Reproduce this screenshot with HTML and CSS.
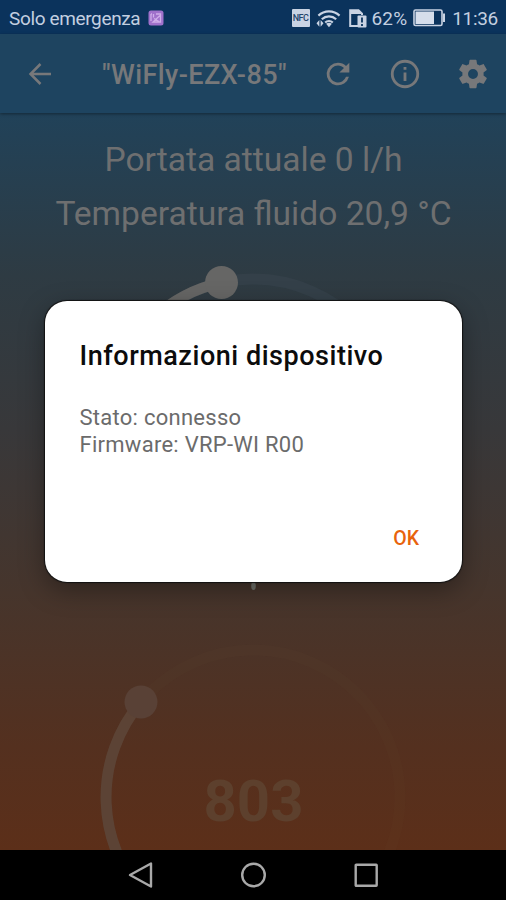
FILE: index.html
```
<!DOCTYPE html>
<html lang="it">
<head>
    <meta charset="UTF-8">
    <meta name="viewport" content="width=device-width, initial-scale=1.0">
    <title>WiFly-EZX-85</title>
    <link rel="stylesheet" href="styles.css">
</head>
<body>
    <div class="phone">
        <div class="status-bar">
            <span class="carrier">Solo emergenza</span>
            <svg class="app-badge" width="16" height="16" viewBox="0 0 16 16">
                <rect x="0.5" y="0.5" width="15" height="15" rx="2.5" fill="#a071cb"/>
                <path d="M3 4v7M5.500 4v3.500M3 4h1M8 4h4.500v8H5l7-6.500M6 8.500l5 3" fill="none" stroke="#cfadea" stroke-width="1.300"/>
            </svg>
            <span class="nfc">NFC</span>
            <svg class="wifi" width="25" height="19" viewBox="0 0 26 19">
                <g fill="none" stroke="#c9d3e3" stroke-width="2.200">
                    <path d="M2.500 6.500a16 16 0 0 1 22 0"/>
                    <path d="M6 10.300a11 11 0 0 1 15 0"/>
                    <path d="M9.500 13.700a6 6 0 0 1 8 0"/>
                </g>
                <path d="M13.500 18.500l-3-3.500q3-2 6 0z" fill="#c9d3e3"/>
                <path d="M.500 14.500l3-3.500v7zM7.800 14.500l-3-3.500v7z" fill="#c9d3e3"/>
            </svg>
            <svg class="sim" width="18" height="19" viewBox="0 0 18 19">
                <path d="M9 17H1.200V1.200h8.300l3.500 3.500V6" fill="none" stroke="#c9d3e3" stroke-width="2"/>
                <path d="M1 1h8.500L13 5H1z" fill="#c9d3e3"/>
                <rect x="8.500" y="6.500" width="9" height="12" rx="1" fill="#c9d3e3"/>
                <path d="M13 8.500v5M13 15v2" stroke="#0b335c" stroke-width="1.800"/>
            </svg>
            <span class="percent">62%</span>
            <svg class="battery" width="33" height="18" viewBox="0 0 33 18">
                <rect x="1" y="1" width="28" height="15.500" rx="1.500" fill="none" stroke="#c9d3e3" stroke-width="1.600"/>
                <rect x="2.500" y="2.500" width="18.500" height="12.500" fill="#d6deeb"/>
                <path d="M31 4.500v8.500" stroke="#c9d3e3" stroke-width="2"/>
            </svg>
            <span class="clock">11:36</span>
        </div>

        <div class="app-bar">
            <svg class="back" width="24" height="24" viewBox="0 0 24 24">
                <path d="M23 12H2.500M12.500 2L2.500 12l10 10" fill="none" stroke="currentColor" stroke-width="2.500"/>
            </svg>
            <h1>"WiFly-EZX-85"</h1>
            <svg class="refresh" width="34" height="34" viewBox="0 0 24 24">
                <path fill="currentColor" d="M17.650 6.350A7.960 7.960 0 0 0 12 4a8 8 0 1 0 7.730 10h-2.080A6 6 0 1 1 12 6c1.660 0 3.140.690 4.220 1.780L13 11h7V4z"/>
            </svg>
            <svg class="info" width="34" height="34" viewBox="0 0 24 24">
                <path fill="currentColor" d="M11 17h2v-6h-2zM12 2a10 10 0 1 0 0 20 10 10 0 0 0 0-20zm0 18a8 8 0 1 1 0-16 8 8 0 0 1 0 16zM11 9h2V7h-2z"/>
            </svg>
            <svg class="settings" width="34" height="34" viewBox="0 0 24 24">
                <path fill="currentColor" d="M19.430 12.980c.040-.320.070-.640.070-.980s-.030-.660-.070-.980l2.110-1.650c.190-.150.240-.420.120-.640l-2-3.460c-.120-.220-.390-.300-.610-.220l-2.490 1c-.520-.400-1.080-.730-1.690-.980l-.380-2.650A.488.488 0 0 0 14 2h-4c-.250 0-.460.180-.490.420l-.380 2.650c-.610.250-1.170.590-1.690.980l-2.490-1c-.230-.090-.490 0-.610.220l-2 3.460c-.130.220-.070.490.120.640l2.110 1.650c-.040.320-.070.650-.070.980s.030.660.070.980l-2.110 1.650c-.190.150-.240.420-.120.640l2 3.460c.120.220.390.300.610.220l2.490-1c.520.400 1.080.730 1.690.980l.380 2.650c.030.240.240.420.490.420h4c.250 0 .460-.180.490-.420l.380-2.650c.610-.250 1.170-.590 1.690-.980l2.490 1c.230.090.490 0 .610-.220l2-3.460c.120-.220.070-.490-.120-.640zM12 15.500a3.500 3.500 0 1 1 0-7 3.500 3.500 0 0 1 0 7z"/>
            </svg>
        </div>

        <div class="content">
            <p class="reading">Portata attuale 0 l/h</p>
            <p class="reading">Temperatura fluido 20,9 °C</p>

            <svg class="gauge gauge-flow" width="320" height="330" viewBox="0 0 320 330">
                <path class="track" d="M56 264A147 147 0 1 1 264 264"/>
                <path class="value" d="M56 264A147 147 0 0 1 128.500 16.500"/>
                <circle class="knob" cx="128.500" cy="16.500" r="16.500"/>
                <ellipse class="tick" cx="160.500" cy="320" rx="2.300" ry="4"/>
            </svg>

            <svg class="gauge gauge-power" width="320" height="320" viewBox="0 0 320 320">
                <path class="track" d="M56 264A147 147 0 1 1 264 264"/>
                <path class="value" d="M56 264A147 147 0 0 1 48 65"/>
                <circle class="knob" cx="48" cy="65" r="16.500"/>
                <text x="160.500" y="184" text-anchor="middle">803</text>
            </svg>
        </div>

        <div class="nav-bar">
            <svg width="26" height="28" viewBox="0 0 26 28">
                <path d="M24 2.500v23L3 14z"/>
            </svg>
            <svg width="26" height="28" viewBox="0 0 26 28">
                <circle cx="13.500" cy="14" r="11.300"/>
            </svg>
            <svg width="26" height="28" viewBox="0 0 26 28">
                <rect x="2.700" y="3.700" width="21" height="21" rx="0.500"/>
            </svg>
        </div>

        <div class="dialog">
            <h2>Informazioni dispositivo</h2>
            <p>Stato: connesso<br>Firmware: VRP-WI R00</p>
            <button class="ok-btn">OK</button>
        </div>
    </div>
</body>
</html>
```
FILE: styles.css
```
* {
    margin: 0;
    padding: 0;
    box-sizing: border-box;
}

body {
    background: #000;
    font-family: Roboto, sans-serif;
    overflow: hidden;
}

.phone {
    position: relative;
    display: flex;
    flex-direction: column;
    width: 506px;
    height: 900px;
    overflow: hidden;
}

/* Android status bar */
.status-bar {
    display: flex;
    align-items: center;
    flex: none;
    height: 34px;
    padding: 2px 8px 0 9px;
    background: #0b335c;
    color: #c3cfe0;
    font-size: 19px;
    white-space: nowrap;
}

.carrier {
    letter-spacing: -0.36px;
}

.app-badge {
    margin-left: 8px;
}

.nfc {
    width: 18px;
    height: 18px;
    margin-left: auto;
    border-radius: 1px;
    background: #c9d3e3;
    color: #24456b;
    font-size: 9px;
    font-weight: 500;
    line-height: 18px;
    letter-spacing: -0.5px;
    text-align: center;
}

.wifi {
    margin-left: 6px;
}

.sim {
    margin-left: 8px;
}

.percent {
    margin-left: 5px;
    letter-spacing: 0.1px;
}

.battery {
    margin-left: 6px;
}

.clock {
    margin-left: 6px;
    letter-spacing: -0.3px;
}

.app-bar {
    display: flex;
    align-items: center;
    flex: none;
    height: 79px;
    padding: 0 16px 0 28px;
    background: #1e4460;
    color: #77787a;
    box-shadow: 0 1px 3px rgba(0, 0, 0, 0.4);
    z-index: 1;
}

.app-bar h1 {
    margin-left: 50px;
    width: 186px;
    padding-top: 3px;
    font-size: 27px;
    font-weight: 500;
    letter-spacing: 0.4px;
    white-space: nowrap;
}

.refresh {
    margin-left: 33px;
}

.info {
    margin-left: 33px;
}

.settings {
    margin-left: 34px;
}

.content {
    display: flex;
    flex-direction: column;
    align-items: center;
    flex: none;
    height: 737px;
    padding-top: 20px;
    overflow: hidden;
    background: linear-gradient(#214259 0%, #2e3b43 22%, #38383a 43%, #46352c 65%, #54301f 86%, #5c2f19 100%);
}

.reading {
    padding-left: 1px;
    color: #6e6f70;
    font-size: 33.6px;
    line-height: 54px;
    white-space: nowrap;
}

.gauge {
    flex: none;
}

.gauge path {
    fill: none;
    stroke-width: 11;
}

.gauge-flow {
    margin-top: 25px;
}

.gauge-flow .track {
    stroke: #344049;
}

.gauge-flow .value {
    stroke: #666665;
}

.gauge-flow .knob {
    fill: #666665;
}

.gauge-flow .tick {
    fill: #70716b;
}

.gauge-power {
    margin-top: 41px;
}

.gauge-power .track {
    stroke: rgba(120, 90, 80, 0.04);
}

.gauge-power .value {
    stroke: #5c4335;
}

.gauge-power .knob {
    fill: #594136;
}

.gauge-power text {
    fill: #5d402d;
    font-size: 58px;
    font-weight: 700;
}

.nav-bar {
    display: flex;
    align-items: center;
    justify-content: center;
    gap: 87px;
    flex: none;
    height: 50px;
    background: #000;
}

.nav-bar svg {
    fill: none;
    stroke: #a9a9a9;
    stroke-width: 2.4;
    stroke-linejoin: round;
}

.dialog {
    position: absolute;
    top: 301px;
    left: 45px;
    display: flex;
    flex-direction: column;
    width: 417px;
    height: 281px;
    padding: 36px 43px 28px 34.5px;
    border-radius: 22px;
    background: #fff;
    box-shadow: 0 0 1px 1px #111, 0 8px 26px rgba(0, 0, 0, 0.35);
}

.dialog h2 {
    color: #0c0c0c;
    font-size: 27px;
    font-weight: 500;
    line-height: 38px;
    letter-spacing: 0.53px;
    white-space: nowrap;
}

.dialog p {
    margin-top: 30px;
    color: #6b6b6b;
    font-size: 22px;
    line-height: 26.5px;
    letter-spacing: 0.27px;
}

.ok-btn {
    margin-top: auto;
    align-self: flex-end;
    border: none;
    background: none;
    color: #e8630c;
    font-family: inherit;
    font-size: 19.5px;
    font-weight: 500;
    line-height: 30px;
}
```
